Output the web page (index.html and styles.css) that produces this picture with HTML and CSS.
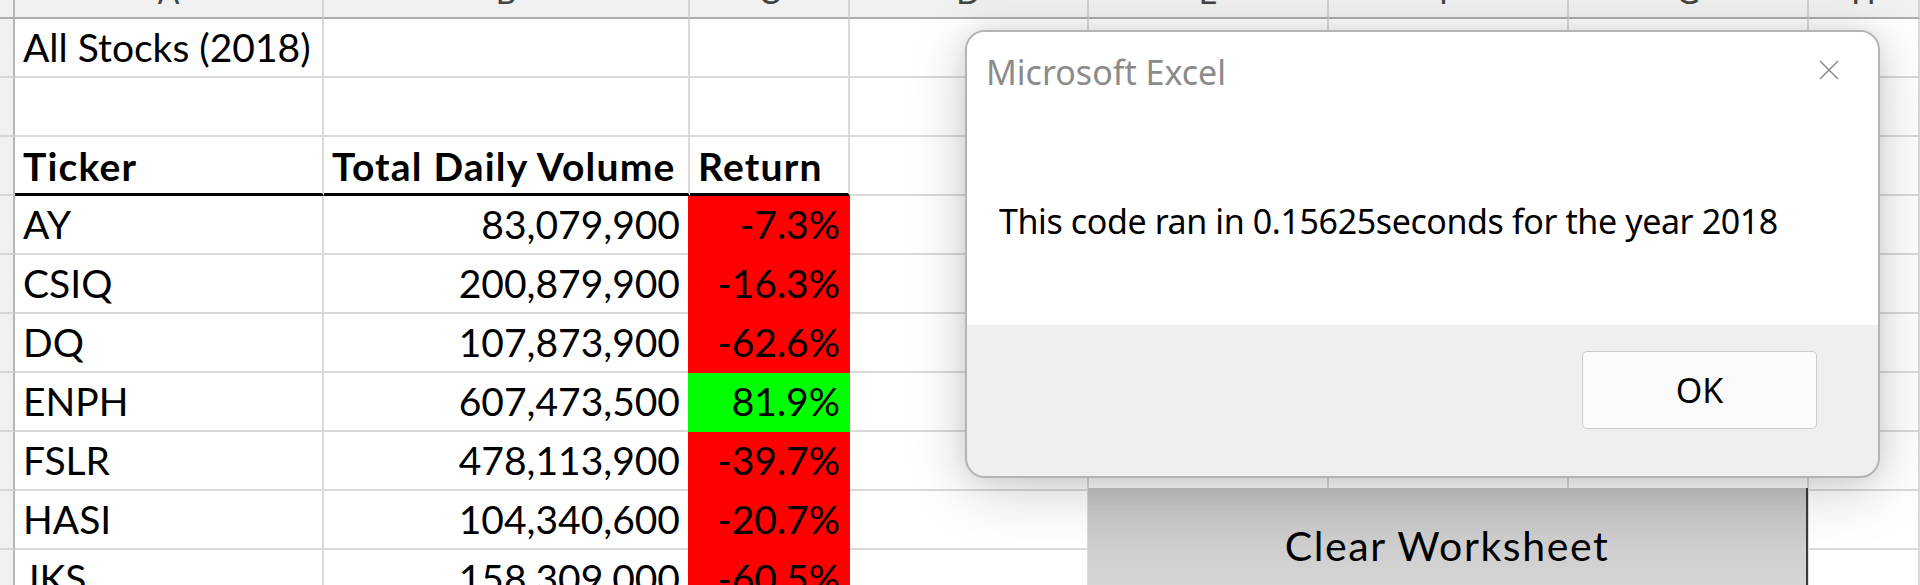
FILE: index.html
```html
<!DOCTYPE html>
<html>
<head>
<meta charset="utf-8">
<link rel="stylesheet" href="styles.css">
</head>
<body>
<div class="sheet">
  <div class="rh corner"></div>
  <div class="ch"><span>A</span></div>
  <div class="ch"><span>B</span></div>
  <div class="ch"><span>C</span></div>
  <div class="ch"><span>D</span></div>
  <div class="ch"><span>E</span></div>
  <div class="ch"><span>F</span></div>
  <div class="ch"><span>G</span></div>
  <div class="ch"><span>H</span></div>

  <div class="rh"></div>
  <div class="c">All Stocks (2018)</div>
  <div class="c"></div><div class="c"></div><div class="c"></div><div class="c"></div><div class="c"></div><div class="c"></div><div class="c"></div>

  <div class="rh"></div>
  <div class="c"></div><div class="c"></div><div class="c"></div><div class="c"></div><div class="c"></div><div class="c"></div><div class="c"></div><div class="c"></div>

  <div class="rh"></div>
  <div class="c hdr">Ticker</div>
  <div class="c hdr">Total Daily Volume</div>
  <div class="c hdr">Return</div>
  <div class="c"></div><div class="c"></div><div class="c"></div><div class="c"></div><div class="c"></div>

  <div class="rh"></div>
  <div class="c">AY</div>
  <div class="c num">83,079,900</div>
  <div class="c num red">-7.3%</div>
  <div class="c"></div><div class="c"></div><div class="c"></div><div class="c"></div><div class="c"></div>

  <div class="rh"></div>
  <div class="c">CSIQ</div>
  <div class="c num">200,879,900</div>
  <div class="c num red">-16.3%</div>
  <div class="c"></div><div class="c"></div><div class="c"></div><div class="c"></div><div class="c"></div>

  <div class="rh"></div>
  <div class="c">DQ</div>
  <div class="c num">107,873,900</div>
  <div class="c num red">-62.6%</div>
  <div class="c"></div><div class="c"></div><div class="c"></div><div class="c"></div><div class="c"></div>

  <div class="rh"></div>
  <div class="c">ENPH</div>
  <div class="c num">607,473,500</div>
  <div class="c num green">81.9%</div>
  <div class="c"></div><div class="c"></div><div class="c"></div><div class="c"></div><div class="c"></div>

  <div class="rh"></div>
  <div class="c">FSLR</div>
  <div class="c num">478,113,900</div>
  <div class="c num red">-39.7%</div>
  <div class="c"></div><div class="c"></div><div class="c"></div><div class="c"></div><div class="c"></div>

  <div class="rh"></div>
  <div class="c">HASI</div>
  <div class="c num">104,340,600</div>
  <div class="c num red">-20.7%</div>
  <div class="c"></div><div class="c"></div><div class="c"></div><div class="c"></div><div class="c"></div>

  <div class="rh"></div>
  <div class="c">JKS</div>
  <div class="c num">158,309,000</div>
  <div class="c num red">-60.5%</div>
  <div class="c"></div><div class="c"></div><div class="c"></div><div class="c"></div><div class="c"></div>
</div>

<div class="clear-btn">Clear Worksheet</div>

<div class="dialog">
  <div class="dlg-body">
    <div class="dlg-top">
      <div class="dlg-title">Microsoft Excel</div>
      <svg class="dlg-close" viewBox="0 0 20 20" width="20" height="20">
        <path d="M1 1 L19 19 M19 1 L1 19" stroke="#8a8a8a" stroke-width="1.5" fill="none"/>
      </svg>
    </div>
    <div class="dlg-msg">This code ran in 0.15625seconds for the year 2018</div>
  </div>
  <div class="dlg-foot">
    <div class="ok">OK</div>
  </div>
</div>
</body>
</html>
```
FILE: styles.css
```css
* { box-sizing: border-box; }

html, body {
  margin: 0;
  padding: 0;
}

body {
  width: 1920px;
  height: 585px;
  overflow: hidden;
  position: relative;
  background: #ffffff;
}

.sheet {
  display: grid;
  grid-template-columns: 15px 309px 366px 160px 239px 240px 240px 240px 1fr;
  grid-template-rows: 19px;
  grid-auto-rows: 59px;
  font-family: Lato, "Liberation Sans", sans-serif;
  font-size: 39px;
  color: #000;
}

.ch {
  background: #f0f0f0;
  border-right: 2px solid #d2d2d2;
  border-bottom: 2px solid #acacac;
  overflow: hidden;
  text-align: center;
  font-size: 32px;
  line-height: 32px;
  color: #444;
}

.ch span {
  display: block;
  margin-top: -24px;
}

.rh {
  background: #f0f0f0;
  border-right: 2px solid #b6b6b6;
  border-bottom: 2px solid #d6d6d6;
}

.rh.corner {
  border-bottom: 2px solid #acacac;
}

.c {
  border-right: 2px solid #dadada;
  border-bottom: 2px solid #dadada;
  display: flex;
  align-items: flex-end;
  padding: 0 8px 9px 8px;
  line-height: 39px;
  white-space: nowrap;
}

.num {
  justify-content: flex-end;
}

.hdr {
  font-weight: 700;
  letter-spacing: 1.2px;
  border-bottom: 3px solid #000;
  padding-bottom: 7px;
}

.red {
  background: #ff0000;
  border-color: #ff0000;
  box-shadow: -2px 0 0 #ff0000;
}

.green {
  background: #00ff00;
  border-color: #00ff00;
  box-shadow: -2px 0 0 #00ff00;
}

.clear-btn {
  position: absolute;
  left: 1088px;
  top: 488px;
  width: 720px;
  height: 120px;
  background: linear-gradient(#c5c5c5, #d8d8d8);
  border-right: 2px solid #3a3a3a;
  font-family: Lato, "Liberation Sans", sans-serif;
  font-size: 41px;
  letter-spacing: 1.6px;
  line-height: 41px;
  text-align: center;
  padding-top: 37px;
  color: #000;
}

.dialog {
  position: absolute;
  left: 965px;
  top: 30px;
  width: 915px;
  height: 448px;
  border: 2px solid #b4b4b4;
  border-radius: 20px;
  overflow: hidden;
  background: #efefef;
  box-shadow: 0 12px 60px rgba(0, 0, 0, 0.2), 0 0 20px rgba(0, 0, 0, 0.08);
  font-family: "Noto Sans", "Open Sans", sans-serif;
  display: flex;
  flex-direction: column;
}

.dlg-body {
  background: #ffffff;
  height: 293px;
  flex: none;
}

.dlg-top {
  display: flex;
  justify-content: space-between;
  align-items: flex-start;
}

.dlg-title {
  padding: 22px 0 0 19px;
  font-size: 34px;
  line-height: 36px;
  color: #8b8b8b;
  white-space: nowrap;
}

.dlg-close {
  margin: 28px 39px 0 0;
  width: 20px;
  height: 20px;
}

.dlg-msg {
  padding: 114px 0 0 32px;
  font-size: 34px;
  letter-spacing: -0.4px;
  line-height: 35px;
  color: #000;
  white-space: nowrap;
}

.dlg-foot {
  flex: 1;
  display: flex;
  justify-content: flex-end;
  align-items: flex-start;
  padding: 26px 61px 0 0;
}

.ok {
  width: 235px;
  height: 78px;
  border: 1.5px solid #cbcbcb;
  border-radius: 5px;
  background: #fbfbfb;
  font-size: 34px;
  display: flex;
  align-items: center;
  justify-content: center;
  color: #000;
}
```
